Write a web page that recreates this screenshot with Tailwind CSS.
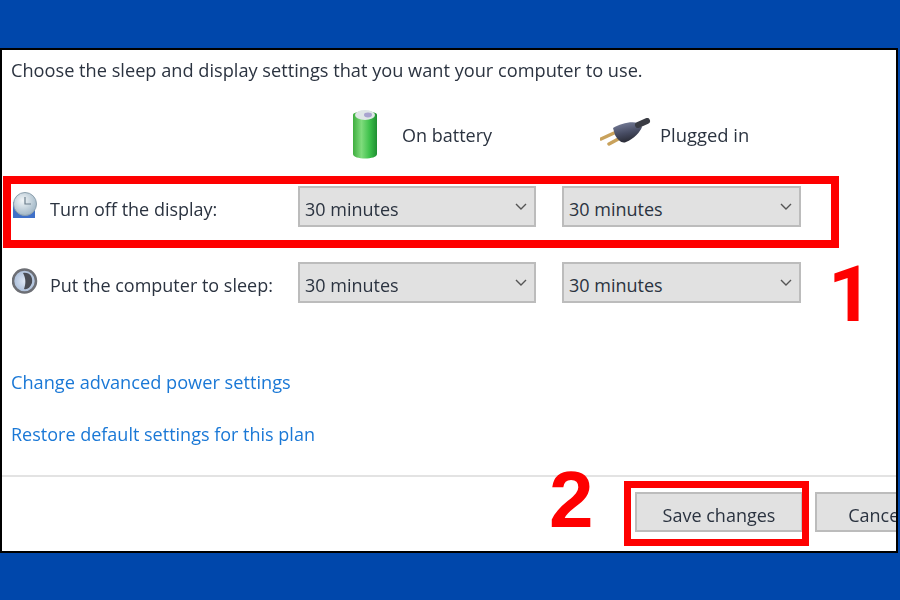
<!DOCTYPE html>
<html lang="en">
<head>
    <meta charset="UTF-8">
    <meta name="viewport" content="width=device-width, initial-scale=1.0">
    <script src="https://cdn.jsdelivr.net/npm/@tailwindcss/browser@4"></script>
    <title>Power settings</title>
</head>
<body class="bg-[#0047ab] w-[900px] h-[600px] overflow-hidden flex flex-col justify-center font-['Open_Sans',sans-serif] text-[#2b3340]">
    <div class="relative w-[898px] h-[505px] bg-white border-2 border-black overflow-hidden">
        <div class="flex flex-col h-full blur-[0.5px]">
            <p class="h-[42px] pl-[9px] flex items-center text-[18.2px] whitespace-nowrap">Choose the sleep and display settings that you want your computer to use.</p>

            <!-- column headers -->
            <div class="mt-[16px] h-[52px] grid grid-cols-[296px_264px_auto] items-center text-[18px]">
                <div></div>
                <div class="flex items-center pl-[54px] gap-[22px]">
                    <svg class="shrink-0" width="28" height="52" viewBox="0 0 28 52">
                        <defs>
                            <linearGradient id="batt" x1="0" x2="1" y1="0" y2="0">
                                <stop offset="0" stop-color="#3fae3f"/>
                                <stop offset="0.35" stop-color="#7fdc7c"/>
                                <stop offset="0.7" stop-color="#3cc04a"/>
                                <stop offset="1" stop-color="#1f8f32"/>
                            </linearGradient>
                        </defs>
                        <path d="M1 7 C1 2 25 2 25 7 V46 C25 52 1 52 1 46 Z" fill="url(#batt)"/>
                        <ellipse cx="13" cy="7" rx="10" ry="5" fill="#dfe6e6"/>
                        <ellipse cx="16" cy="7" rx="4" ry="2.4" fill="#a9a4cf"/>
                    </svg>
                    <span class="pt-[3px]">On battery</span>
                </div>
                <div class="flex items-center pl-[38px] gap-[9px]">
                    <svg class="shrink-0" width="51" height="30" viewBox="0 0 51 30">
                        <defs>
                            <linearGradient id="plug" x1="0" x2="0.3" y1="0" y2="1">
                                <stop offset="0" stop-color="#7d84a0"/>
                                <stop offset="0.6" stop-color="#474c63"/>
                                <stop offset="1" stop-color="#2b2d38"/>
                            </linearGradient>
                        </defs>
                        <path d="M1 21 L14 15 M9 26 L22 19" stroke="#c9a25c" stroke-width="3.5" stroke-linecap="round"/>
                        <path d="M13 10 C20 6 30 3 38 5 L42 9 C40 14 34 21 26 24 C22 26 18 22 15 17 Z" fill="url(#plug)"/>
                        <path d="M38 7 L47 3" stroke="#3a3c44" stroke-width="6" stroke-linecap="round"/>
                    </svg>
                    <span class="pt-[3px] text-[18.4px]">Plugged in</span>
                </div>
            </div>

            <!-- settings rows -->
            <div class="mt-[26px] h-[41px] grid grid-cols-[270px_238px_239px] gap-x-[26px] items-center text-[18px] w-fit">
                <div class="flex items-center pl-[10px] gap-[11px] whitespace-nowrap">
                    <svg class="shrink-0" width="27" height="28" viewBox="0 0 27 28">
                        <defs>
                            <radialGradient id="clock" cx="0.4" cy="0.35" r="0.7">
                                <stop offset="0" stop-color="#f2f6f8"/>
                                <stop offset="1" stop-color="#9db4c4"/>
                            </radialGradient>
                        </defs>
                        <rect x="1" y="10" width="22" height="16" fill="#3f70c8"/>
                        <circle cx="13" cy="12" r="11.5" fill="url(#clock)" stroke="#8da0ad"/>
                        <path d="M13 5 V12 H19" fill="none" stroke="#6d7f8c" stroke-width="1.2"/>
                    </svg>
                    <span class="pt-[6px]">Turn off the display:</span>
                </div>
                <div class="h-[41px] bg-[#e1e1e1] border-2 border-[#bcbcbc] flex items-center justify-between pl-[5px] pr-[7px]">
                    <span class="pt-[6px]">30 minutes</span>
                    <svg width="12" height="7" viewBox="0 0 12 7"><path d="M1 1 L6 6 L11 1" fill="none" stroke="#555" stroke-width="1.4"/></svg>
                </div>
                <div class="h-[41px] bg-[#e1e1e1] border-2 border-[#bcbcbc] flex items-center justify-between pl-[5px] pr-[7px]">
                    <span class="pt-[6px]">30 minutes</span>
                    <svg width="12" height="7" viewBox="0 0 12 7"><path d="M1 1 L6 6 L11 1" fill="none" stroke="#555" stroke-width="1.4"/></svg>
                </div>
            </div>
            <div class="mt-[35px] h-[41px] grid grid-cols-[270px_238px_239px] gap-x-[26px] items-center text-[18px] w-fit">
                <div class="flex items-center pl-[10px] gap-[11px] whitespace-nowrap">
                    <svg class="shrink-0" width="27" height="28" viewBox="0 0 27 28">
                        <defs>
                            <radialGradient id="moon" cx="0.5" cy="0.5" r="0.6">
                                <stop offset="0" stop-color="#dfe8f5"/>
                                <stop offset="1" stop-color="#9fb4d2"/>
                            </radialGradient>
                        </defs>
                        <circle cx="12.5" cy="13" r="11.5" fill="url(#moon)" stroke="#6d6f75" stroke-width="2.5"/>
                        <path d="M11 5 C18 4 21 9 20 15 C18 20 15 22 12 21 C14 16 14 10 11 5 Z" fill="#4a4d55"/>
                    </svg>
                    <span class="pt-[6px]">Put the computer to sleep:</span>
                </div>
                <div class="h-[41px] bg-[#e1e1e1] border-2 border-[#bcbcbc] flex items-center justify-between pl-[5px] pr-[7px]">
                    <span class="pt-[6px]">30 minutes</span>
                    <svg width="12" height="7" viewBox="0 0 12 7"><path d="M1 1 L6 6 L11 1" fill="none" stroke="#555" stroke-width="1.4"/></svg>
                </div>
                <div class="h-[41px] bg-[#e1e1e1] border-2 border-[#bcbcbc] flex items-center justify-between pl-[5px] pr-[7px]">
                    <span class="pt-[6px]">30 minutes</span>
                    <svg width="12" height="7" viewBox="0 0 12 7"><path d="M1 1 L6 6 L11 1" fill="none" stroke="#555" stroke-width="1.4"/></svg>
                </div>
            </div>

            <!-- links -->
            <a class="mt-[65px] h-[30px] pl-[9px] flex items-center text-[18.2px] text-[#1a78d6]">Change advanced power settings</a>
            <a class="mt-[22px] h-[30px] pl-[9px] flex items-center text-[18px] text-[#1a78d6]">Restore default settings for this plan</a>

            <!-- footer -->
            <div class="mt-[25px] border-t-2 border-[#e3e3e3] flex-1 flex items-start pt-[15px] pl-[633px] gap-[12px] text-[18px] whitespace-nowrap">
                <div class="w-[168px] h-[40px] shrink-0 bg-[#e1e1e1] border-2 border-[#bcbcbc] flex items-center justify-center"><span class="pt-[8px]">Save changes</span></div>
                <div class="w-[122px] h-[40px] shrink-0 bg-[#e1e1e1] border-2 border-[#bcbcbc] flex items-center justify-center"><span class="pt-[8px]">Cancel</span></div>
            </div>
        </div>

        <!-- red annotations -->
        <div class="absolute left-[1px] top-[126px] w-[836px] h-[72px] border-[8px] border-[#fe0000]"></div>
        <div class="absolute left-[622px] top-[431px] w-[185px] h-[65px] border-[7px] border-[#fe0000]"></div>
        <span class="absolute left-[826px] top-[206px] text-[78px] leading-none font-bold text-[#fe0000] font-['Roboto',sans-serif]">1</span>
        <span class="absolute left-[547px] top-[410px] text-[80px] leading-none font-bold text-[#fe0000] font-['Liberation_Sans',sans-serif]">2</span>
    </div>
</body>
</html>
